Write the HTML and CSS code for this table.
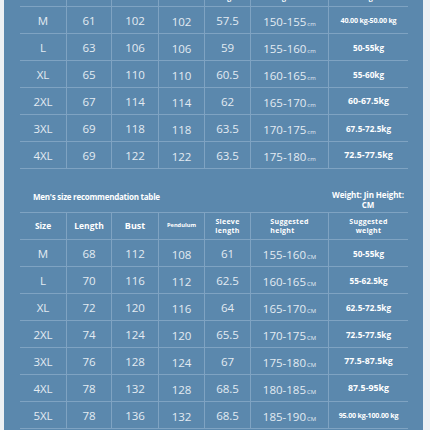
FILE: index.html
```html
<!DOCTYPE html>
<html>

<head>
  <meta charset="utf-8" />
  <title>Size chart</title>
  <link rel="stylesheet" href="styles.css">
</head>

<body>
  <div class="panel">
    <div class="grid top">
      <div class="head h-size">Size</div>
      <div class="head h-len">Length</div>
      <div class="head h-bust">Bust</div>
      <div class="head h-pend">Pendulum</div>
      <div class="head h-two">Sleeve<br>length</div>
      <div class="head h-two"><span class="left">Suggested<br>height</span></div>
      <div class="head h-two">Suggested<br>weight</div>

      <div>M</div><div>61</div><div>102</div><div class="low">102</div><div>57.5</div><div class="ht">150-155<small>cm</small></div><div class="wt xs">40.00 kg-50.00 kg</div>
      <div>L</div><div>63</div><div>106</div><div class="low">106</div><div>59</div><div class="ht">155-160<small>cm</small></div><div class="wt">50-55kg</div>
      <div>XL</div><div>65</div><div>110</div><div class="low">110</div><div>60.5</div><div class="ht">160-165<small>cm</small></div><div class="wt">55-60kg</div>
      <div>2XL</div><div>67</div><div>114</div><div class="low">114</div><div>62</div><div class="ht">165-170<small>cm</small></div><div class="wt lg">60-67.5kg</div>
      <div>3XL</div><div>69</div><div>118</div><div class="low">118</div><div>63.5</div><div class="ht">170-175<small>cm</small></div><div class="wt">67.5-72.5kg</div>
      <div>4XL</div><div>69</div><div>122</div><div class="low">122</div><div>63.5</div><div class="ht">175-180<small>cm</small></div><div class="wt lg">72.5-77.5kg</div>
    </div>

    <div class="caption">
      <span class="title">Men's size recommendation table</span>
      <span class="unit">Weight: Jin Height:<br>CM</span>
    </div>

    <div class="grid framed">
      <div class="head h-size">Size</div>
      <div class="head h-len">Length</div>
      <div class="head h-bust">Bust</div>
      <div class="head h-pend">Pendulum</div>
      <div class="head h-two">Sleeve<br>length</div>
      <div class="head h-two"><span class="left">Suggested<br>height</span></div>
      <div class="head h-two">Suggested<br>weight</div>

      <div>M</div><div>68</div><div>112</div><div class="low">108</div><div>61</div><div class="ht">155-160<small>CM</small></div><div class="wt">50-55kg</div>
      <div>L</div><div>70</div><div>116</div><div class="low">112</div><div>62.5</div><div class="ht">160-165<small>CM</small></div><div class="wt">55-62.5kg</div>
      <div>XL</div><div>72</div><div>120</div><div class="low">116</div><div>64</div><div class="ht">165-170<small>CM</small></div><div class="wt">62.5-72.5kg</div>
      <div>2XL</div><div>74</div><div>124</div><div class="low">120</div><div>65.5</div><div class="ht">170-175<small>CM</small></div><div class="wt">72.5-77.5kg</div>
      <div>3XL</div><div>76</div><div>128</div><div class="low">124</div><div>67</div><div class="ht">175-180<small>CM</small></div><div class="wt lg">77.5-87.5kg</div>
      <div>4XL</div><div>78</div><div>132</div><div class="low">128</div><div>68.5</div><div class="ht">180-185<small>CM</small></div><div class="wt lg">87.5-95kg</div>
      <div>5XL</div><div>78</div><div>136</div><div class="low">132</div><div>68.5</div><div class="ht">185-190<small>CM</small></div><div class="wt xs">95.00 kg-100.00 kg</div>
    </div>
  </div>
</body>

</html>
```

FILE: styles.css
```css
html,
body {
  margin: 0;
  padding: 0;
}

body {
  background: #eef1f4;
  font-family: "Open Sans", "Liberation Sans", sans-serif;
}

.panel {
  height: 430px;
  margin: 0 7px 0 4px;
  padding: 0 15px 0 16px;
  background: #5b88ad;
  overflow: hidden;
}

.grid {
  display: grid;
  grid-template-columns: 46px 45px 47px 46px 46px 78px 80px;
}

.grid.top {
  margin-top: -20px;
}

.grid.framed {
  border-top: 1px solid #7fa3c2;
}

.grid > div {
  height: 27px;
  box-sizing: border-box;
  border-bottom: 1px solid #7fa3c2;
  border-left: 1px solid #7fa3c2;
  display: flex;
  align-items: center;
  justify-content: center;
  color: #e3ebf2;
  font-size: 11.5px;
  white-space: nowrap;
}

.grid > div:nth-child(7n+1) {
  border-left: none;
}

.grid .low {
  padding-top: 3px;
}

.grid .ht {
  align-items: baseline;
  padding-top: 7px;
}

.ht small {
  font-size: 6px;
  margin-left: 1px;
}

/* weight column, bold and small */
.grid .wt {
  color: #fff;
  font-weight: 700;
  font-size: 8.2px;
}

.grid .wt.lg {
  font-size: 8.8px;
}

.grid .wt.xs {
  font-size: 7.1px;
  letter-spacing: -0.2px;
}

.grid .head {
  color: #fff;
  font-weight: 700;
  text-align: center;
  line-height: 1.3;
}

.head.h-size {
  font-size: 8.4px;
}

.head.h-len {
  font-size: 8.5px;
}

.head.h-bust {
  font-size: 9px;
}

.head.h-pend {
  font-size: 5.7px;
}

.head.h-two {
  font-size: 7px;
  letter-spacing: 0.3px;
}

.head .left {
  text-align: left;
}

.caption {
  height: 43px;
  display: grid;
  grid-template-columns: 1fr 80px;
  color: #fff;
  font-weight: 700;
}

.caption .title {
  margin: 23px 0 0 13px;
  font-size: 8px;
  line-height: 10px;
  letter-spacing: -0.25px;
}

.caption .unit {
  align-self: end;
  margin-bottom: 2px;
  font-size: 8px;
  line-height: 10px;
  letter-spacing: -0.1px;
  text-align: center;
  white-space: nowrap;
}
```
